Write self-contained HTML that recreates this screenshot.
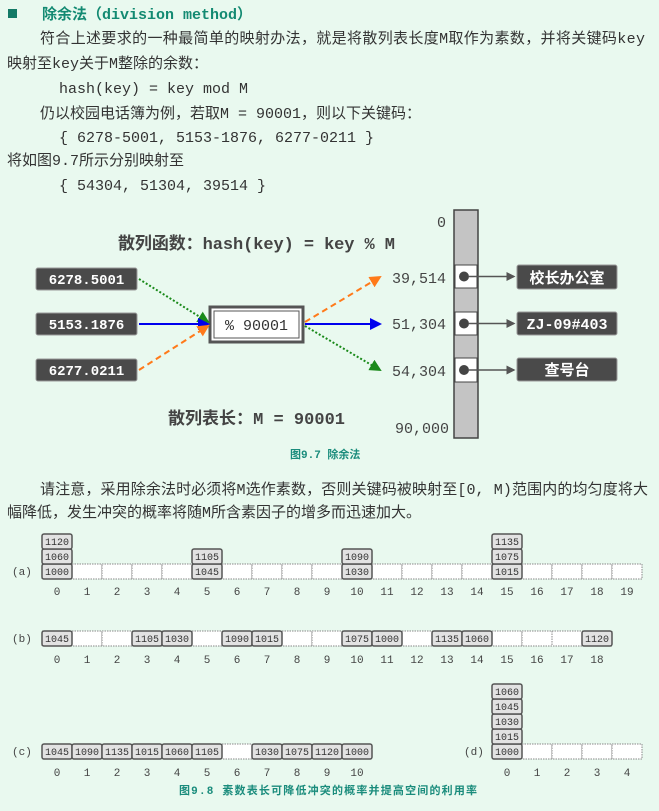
<!DOCTYPE html>
<html><head><meta charset="utf-8"><style>
html,body{margin:0;padding:0;background:#e9f9ef;}
svg{display:block}
.t{font-family:"Liberation Mono","Noto Sans CJK SC",monospace;font-size:15px;fill:#333}
.c{font-family:"Liberation Sans","Noto Sans CJK SC",sans-serif;}
.cap{font-family:"Liberation Mono","Noto Sans CJK SC",monospace;font-size:11px;font-weight:bold;fill:#1a8c7c}
.k{font-family:"Liberation Mono",monospace;font-size:10px;fill:#333}
.lb{font-family:"Liberation Mono",monospace;font-size:11px;fill:#444}
.o{fill:#e2e2e2;stroke:#555;stroke-width:1.5}
.e{fill:#fff;stroke:#888;stroke-width:1;stroke-dasharray:1.5 1}
</style></head><body>
<svg width="659" height="811" viewBox="0 0 659 811" xmlns="http://www.w3.org/2000/svg">
<rect width="659" height="811" fill="#e9f9ef"/>
<rect x="8" y="9" width="9" height="9" fill="#137a66"/>
<text x="42" y="19" class="t" style="font-weight:bold;fill:#138a72">除余法（division method）</text>
<text x="40" y="43" class="t" textLength="605">符合上述要求的一种最简单的映射办法，就是将散列表长度M取作为素数，并将关键码key</text>
<text x="7" y="68" class="t">映射至key关于M整除的余数：</text>
<text x="59" y="93" class="t">hash(key)  =  key mod M</text>
<text x="40" y="118" class="t">仍以校园电话簿为例，若取M = 90001，则以下关键码：</text>
<text x="59" y="142" class="t">{ 6278-5001, 5153-1876, 6277-0211 }</text>
<text x="7" y="165" class="t">将如图9.7所示分别映射至</text>
<text x="59" y="190" class="t">{ 54304, 51304, 39514 }</text>

<!-- Fig 9.7 -->
<text x="118" y="249" class="t" style="font-size:17px;font-weight:bold;fill:#444" textLength="277">散列函数：hash(key) = key % M</text>
<g font-family="Liberation Mono,monospace" font-size="14" font-weight="bold" fill="#fff">
<rect x="36" y="268" width="101" height="22" rx="2" fill="#4a4a4a" stroke="#999"/>
<text x="86.5" y="284" text-anchor="middle">6278.5001</text>
<rect x="36" y="313" width="101" height="22" rx="2" fill="#4a4a4a" stroke="#999"/>
<text x="86.5" y="329" text-anchor="middle">5153.1876</text>
<rect x="36" y="359" width="101" height="22" rx="2" fill="#4a4a4a" stroke="#999"/>
<text x="86.5" y="375" text-anchor="middle">6277.0211</text>
</g>
<rect x="210" y="307" width="93" height="35" fill="#fff" stroke="#555" stroke-width="3"/>
<rect x="214" y="311" width="85" height="27" fill="#fff" stroke="#555" stroke-width="1"/>
<text x="256.5" y="330" text-anchor="middle" font-family="Liberation Mono,monospace" font-size="15" fill="#333">% 90001</text>
<defs>
<marker id="ag" markerWidth="6" markerHeight="6" refX="5" refY="3" orient="auto"><path d="M0,0L6,3L0,6z" fill="#1a8a1a"/></marker>
<marker id="ab" markerWidth="6" markerHeight="6" refX="5" refY="3" orient="auto"><path d="M0,0L6,3L0,6z" fill="#0000ee"/></marker>
<marker id="ao" markerWidth="6" markerHeight="6" refX="5" refY="3" orient="auto"><path d="M0,0L6,3L0,6z" fill="#ff7a1a"/></marker>
<marker id="ak" markerWidth="6" markerHeight="6" refX="5" refY="3" orient="auto"><path d="M0,0L6,3L0,6z" fill="#555"/></marker>
</defs>
<line x1="139" y1="279" x2="208" y2="322" stroke="#1a8a1a" stroke-width="2" stroke-dasharray="2 2" marker-end="url(#ag)"/>
<line x1="139" y1="324" x2="208" y2="324" stroke="#0000ee" stroke-width="2" marker-end="url(#ab)"/>
<line x1="139" y1="370" x2="208" y2="326" stroke="#ff7a1a" stroke-width="2" stroke-dasharray="6 4" marker-end="url(#ao)"/>
<line x1="305" y1="322" x2="380" y2="277" stroke="#ff7a1a" stroke-width="2" stroke-dasharray="6 4" marker-end="url(#ao)"/>
<line x1="305" y1="324" x2="380" y2="324" stroke="#0000ee" stroke-width="2" marker-end="url(#ab)"/>
<line x1="305" y1="326" x2="380" y2="370" stroke="#1a8a1a" stroke-width="2" stroke-dasharray="2 2" marker-end="url(#ag)"/>
<g font-family="Liberation Mono,monospace" font-size="15" fill="#444">
<text x="446" y="227" text-anchor="end">0</text>
<text x="446" y="283" text-anchor="end">39,514</text>
<text x="446" y="329" text-anchor="end">51,304</text>
<text x="446" y="376" text-anchor="end">54,304</text>
<text x="449" y="433" text-anchor="end">90,000</text>
</g>
<rect x="454" y="210" width="24" height="228" fill="#c4c4c4" stroke="#444" stroke-width="1.5"/>
<rect x="455" y="265" width="22" height="23" fill="#fff" stroke="#444"/>
<rect x="455" y="312" width="22" height="23" fill="#fff" stroke="#444"/>
<rect x="455" y="358" width="22" height="24" fill="#fff" stroke="#444"/>
<circle cx="464" cy="276.5" r="5" fill="#444"/>
<circle cx="464" cy="323.5" r="5" fill="#444"/>
<circle cx="464" cy="370" r="5" fill="#444"/>
<line x1="469" y1="276.5" x2="514" y2="276.5" stroke="#555" stroke-width="1.5" marker-end="url(#ak)"/>
<line x1="469" y1="323.5" x2="514" y2="323.5" stroke="#555" stroke-width="1.5" marker-end="url(#ak)"/>
<line x1="469" y1="370" x2="514" y2="370" stroke="#555" stroke-width="1.5" marker-end="url(#ak)"/>
<g font-family="Liberation Mono,Noto Sans CJK SC,monospace" font-size="15" font-weight="bold" fill="#fff">
<rect x="517" y="265" width="100" height="24" rx="2" fill="#4a4a4a" stroke="#999"/>
<text x="567" y="283" text-anchor="middle">校长办公室</text>
<rect x="517" y="312" width="100" height="23" rx="2" fill="#4a4a4a" stroke="#999"/>
<text x="567" y="329" text-anchor="middle">ZJ-09#403</text>
<rect x="517" y="358" width="100" height="23" rx="2" fill="#4a4a4a" stroke="#999"/>
<text x="567" y="375" text-anchor="middle">查号台</text>
</g>
<text x="168" y="424" class="t" style="font-size:17px;font-weight:bold;fill:#444" textLength="177">散列表长：M = 90001</text>
<text x="290" y="458" class="cap">图9.7 除余法</text>

<text x="40" y="494" class="t" textLength="608">请注意，采用除余法时必须将M选作素数，否则关键码被映射至[0, M)范围内的均匀度将大</text>
<text x="7" y="517" class="t">幅降低，发生冲突的概率将随M所含素因子的增多而迅速加大。</text>

<!-- row a -->
<g>
<text x="12" y="575" class="lb">(a)</text>
<rect x="42" y="564" width="600" height="15" class="e"/>
<g class="e"><rect x="72" y="564" width="30" height="15"/><rect x="102" y="564" width="30" height="15"/><rect x="132" y="564" width="30" height="15"/><rect x="162" y="564" width="30" height="15"/><rect x="222" y="564" width="30" height="15"/><rect x="252" y="564" width="30" height="15"/><rect x="282" y="564" width="30" height="15"/><rect x="312" y="564" width="30" height="15"/><rect x="372" y="564" width="30" height="15"/><rect x="402" y="564" width="30" height="15"/><rect x="432" y="564" width="30" height="15"/><rect x="462" y="564" width="30" height="15"/><rect x="522" y="564" width="30" height="15"/><rect x="552" y="564" width="30" height="15"/><rect x="582" y="564" width="30" height="15"/><rect x="612" y="564" width="30" height="15"/></g>
<g class="o"><rect x="42" y="564" width="30" height="15" rx="2"/><rect x="42" y="549" width="30" height="15" rx="2"/><rect x="42" y="534" width="30" height="15" rx="2"/>
<rect x="192" y="564" width="30" height="15" rx="2"/><rect x="192" y="549" width="30" height="15" rx="2"/>
<rect x="342" y="564" width="30" height="15" rx="2"/><rect x="342" y="549" width="30" height="15" rx="2"/>
<rect x="492" y="564" width="30" height="15" rx="2"/><rect x="492" y="549" width="30" height="15" rx="2"/><rect x="492" y="534" width="30" height="15" rx="2"/></g>
<g class="k" text-anchor="middle">
<text x="57" y="575">1000</text><text x="57" y="560">1060</text><text x="57" y="545">1120</text>
<text x="207" y="575">1045</text><text x="207" y="560">1105</text>
<text x="357" y="575">1030</text><text x="357" y="560">1090</text>
<text x="507" y="575">1015</text><text x="507" y="560">1075</text><text x="507" y="545">1135</text>
</g>
<g class="lb" text-anchor="middle">
<text x="57" y="595">0</text><text x="87" y="595">1</text><text x="117" y="595">2</text><text x="147" y="595">3</text><text x="177" y="595">4</text><text x="207" y="595">5</text><text x="237" y="595">6</text><text x="267" y="595">7</text><text x="297" y="595">8</text><text x="327" y="595">9</text><text x="357" y="595">10</text><text x="387" y="595">11</text><text x="417" y="595">12</text><text x="447" y="595">13</text><text x="477" y="595">14</text><text x="507" y="595">15</text><text x="537" y="595">16</text><text x="567" y="595">17</text><text x="597" y="595">18</text><text x="627" y="595">19</text>
</g>
</g>

<!-- row b -->
<g>
<text x="12" y="642" class="lb">(b)</text>
<rect x="42" y="631" width="570" height="15" class="e"/>
<g class="e"><rect x="72" y="631" width="30" height="15"/><rect x="102" y="631" width="30" height="15"/><rect x="162" y="631" width="30" height="15"/><rect x="192" y="631" width="30" height="15"/><rect x="282" y="631" width="30" height="15"/><rect x="312" y="631" width="30" height="15"/><rect x="402" y="631" width="30" height="15"/><rect x="492" y="631" width="30" height="15"/><rect x="522" y="631" width="30" height="15"/></g>
<g class="o"><rect x="42" y="631" width="30" height="15" rx="2"/><rect x="132" y="631" width="30" height="15" rx="2"/><rect x="162" y="631" width="30" height="15" rx="2"/><rect x="222" y="631" width="30" height="15" rx="2"/><rect x="252" y="631" width="30" height="15" rx="2"/><rect x="342" y="631" width="30" height="15" rx="2"/><rect x="372" y="631" width="30" height="15" rx="2"/><rect x="432" y="631" width="30" height="15" rx="2"/><rect x="462" y="631" width="30" height="15" rx="2"/><rect x="582" y="631" width="30" height="15" rx="2"/></g>
<g class="k" text-anchor="middle">
<text x="57" y="642">1045</text><text x="147" y="642">1105</text><text x="177" y="642">1030</text><text x="237" y="642">1090</text><text x="267" y="642">1015</text><text x="357" y="642">1075</text><text x="387" y="642">1000</text><text x="447" y="642">1135</text><text x="477" y="642">1060</text><text x="597" y="642">1120</text>
</g>
<g class="lb" text-anchor="middle">
<text x="57" y="663">0</text><text x="87" y="663">1</text><text x="117" y="663">2</text><text x="147" y="663">3</text><text x="177" y="663">4</text><text x="207" y="663">5</text><text x="237" y="663">6</text><text x="267" y="663">7</text><text x="297" y="663">8</text><text x="327" y="663">9</text><text x="357" y="663">10</text><text x="387" y="663">11</text><text x="417" y="663">12</text><text x="447" y="663">13</text><text x="477" y="663">14</text><text x="507" y="663">15</text><text x="537" y="663">16</text><text x="567" y="663">17</text><text x="597" y="663">18</text>
</g>
</g>

<!-- row c -->
<g>
<text x="12" y="755" class="lb">(c)</text>
<rect x="222" y="744" width="30" height="15" class="e"/>
<g class="o"><rect x="42" y="744" width="30" height="15" rx="2"/><rect x="72" y="744" width="30" height="15" rx="2"/><rect x="102" y="744" width="30" height="15" rx="2"/><rect x="132" y="744" width="30" height="15" rx="2"/><rect x="162" y="744" width="30" height="15" rx="2"/><rect x="192" y="744" width="30" height="15" rx="2"/><rect x="252" y="744" width="30" height="15" rx="2"/><rect x="282" y="744" width="30" height="15" rx="2"/><rect x="312" y="744" width="30" height="15" rx="2"/><rect x="342" y="744" width="30" height="15" rx="2"/></g>
<g class="k" text-anchor="middle">
<text x="57" y="755">1045</text><text x="87" y="755">1090</text><text x="117" y="755">1135</text><text x="147" y="755">1015</text><text x="177" y="755">1060</text><text x="207" y="755">1105</text><text x="267" y="755">1030</text><text x="297" y="755">1075</text><text x="327" y="755">1120</text><text x="357" y="755">1000</text>
</g>
<g class="lb" text-anchor="middle">
<text x="57" y="776">0</text><text x="87" y="776">1</text><text x="117" y="776">2</text><text x="147" y="776">3</text><text x="177" y="776">4</text><text x="207" y="776">5</text><text x="237" y="776">6</text><text x="267" y="776">7</text><text x="297" y="776">8</text><text x="327" y="776">9</text><text x="357" y="776">10</text>
</g>
</g>

<!-- row d -->
<g>
<text x="464" y="755" class="lb">(d)</text>
<g class="e"><rect x="522" y="744" width="30" height="15"/><rect x="552" y="744" width="30" height="15"/><rect x="582" y="744" width="30" height="15"/><rect x="612" y="744" width="30" height="15"/></g>
<g class="o"><rect x="492" y="744" width="30" height="15" rx="2"/><rect x="492" y="729" width="30" height="15" rx="2"/><rect x="492" y="714" width="30" height="15" rx="2"/><rect x="492" y="699" width="30" height="15" rx="2"/><rect x="492" y="684" width="30" height="15" rx="2"/></g>
<g class="k" text-anchor="middle">
<text x="507" y="755">1000</text><text x="507" y="740">1015</text><text x="507" y="725">1030</text><text x="507" y="710">1045</text><text x="507" y="695">1060</text>
</g>
<g class="lb" text-anchor="middle">
<text x="507" y="776">0</text><text x="537" y="776">1</text><text x="567" y="776">2</text><text x="597" y="776">3</text><text x="627" y="776">4</text>
</g>
</g>
<text x="179" y="794" class="cap" textLength="298">图9.8 素数表长可降低冲突的概率并提高空间的利用率</text>
</svg>
</body></html>
